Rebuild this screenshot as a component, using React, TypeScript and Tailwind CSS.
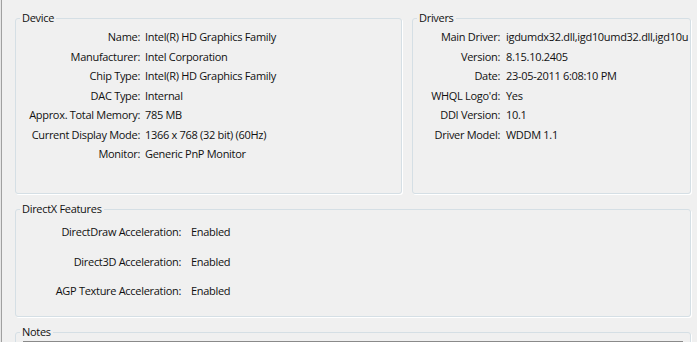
import React from 'react';

const deviceRows: [string, string][] = [
  ['Name:', 'Intel(R) HD Graphics Family'],
  ['Manufacturer:', 'Intel Corporation'],
  ['Chip Type:', 'Intel(R) HD Graphics Family'],
  ['DAC Type:', 'Internal'],
  ['Approx. Total Memory:', '785 MB'],
  ['Current Display Mode:', '1366 x 768 (32 bit) (60Hz)'],
  ['Monitor:', 'Generic PnP Monitor'],
];

const driverRows: [string, string][] = [
  ['Main Driver:', 'igdumdx32.dll,igd10umd32.dll,igd10u'],
  ['Version:', '8.15.10.2405'],
  ['Date:', '23-05-2011 6:08:10 PM'],
  ["WHQL Logo'd:", 'Yes'],
  ['DDI Version:', '10.1'],
  ['Driver Model:', 'WDDM 1.1'],
];

const dxRows: [string, string][] = [
  ['DirectDraw Acceleration:', 'Enabled'],
  ['Direct3D Acceleration:', 'Enabled'],
  ['AGP Texture Acceleration:', 'Enabled'],
];

const Group: React.FC<{ title: string; className?: string; children?: React.ReactNode }> = ({ title, className = '', children }) => (
  <fieldset className={`shrink-0 border border-[#d5dfe5] rounded-[3px] shadow-[1px_1px_0_#ffffff] min-w-0 ${className}`}>
    <legend className="ml-[4px] px-[2px] leading-[16px]">{title}</legend>
    {children}
  </fieldset>
);

export default function App() {
  return (
    <div
      className="w-[697px] h-[342px] overflow-hidden bg-[#f0f0f0] text-[#101010] text-[11px] tracking-[-0.3px] flex"
      style={{ fontFamily: '"Open Sans", "Noto Sans", sans-serif' }}
    >
      <div className="w-[2px] bg-[#e6e6e6]" />
      <div className="w-px bg-[#a0a0a0]" />
      <div className="flex-1 pl-[13px] pr-[6px] pt-[10px] flex flex-col gap-[7px]">
        <div className="flex gap-[10px] shrink-0">
          <Group title="Device" className="w-[387px] h-[184px]">
            <div className="grid grid-cols-[124px_1fr] gap-x-[5px] pt-[1px]">
              {deviceRows.map(([k, v]) => (
                <React.Fragment key={k}>
                  <div className="text-right leading-[19.5px] whitespace-nowrap">{k}</div>
                  <div className="leading-[19.5px] whitespace-nowrap">{v}</div>
                </React.Fragment>
              ))}
            </div>
          </Group>
          <Group title="Drivers" className="w-[279px] h-[184px]">
            <div className="grid grid-cols-[87px_1fr] gap-x-[6px] pt-[1px] pr-[4px] overflow-hidden">
              {driverRows.map(([k, v]) => (
                <React.Fragment key={k}>
                  <div className="text-right leading-[19.5px] whitespace-nowrap">{k}</div>
                  <div className="leading-[19.5px] whitespace-nowrap">{v}</div>
                </React.Fragment>
              ))}
            </div>
          </Group>
        </div>
        <Group title="DirectX Features" className="w-[676px] h-[116px]">
          <div className="grid grid-cols-[165px_1fr] gap-x-[10px]">
            {dxRows.map(([k, v]) => (
              <React.Fragment key={k}>
                <div className="text-right leading-[29.5px] whitespace-nowrap">{k}</div>
                <div className="leading-[29.5px] whitespace-nowrap">{v}</div>
              </React.Fragment>
            ))}
          </div>
        </Group>
        <Group title="Notes" className="w-[676px] h-[60px]">
          <div className="mx-[7px] mt-[1px] h-[40px] border-t border-l border-[#8a8a8a] bg-white" />
        </Group>
      </div>
    </div>
  );
}
